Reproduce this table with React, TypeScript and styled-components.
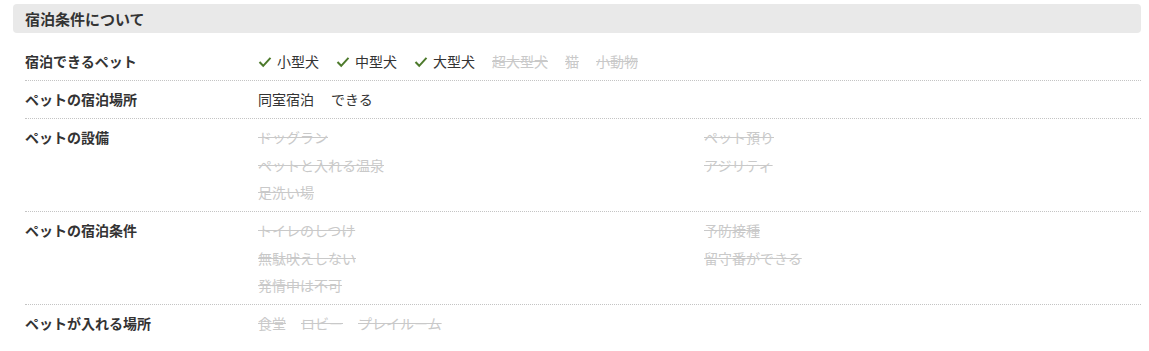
import React from "react";
import styled, { createGlobalStyle } from "styled-components";

const GlobalStyle = createGlobalStyle`
  body {
    margin: 0;
    background: #fff;
    font-family: "Noto Sans CJK JP", "Noto Sans", sans-serif;
    color: #333;
  }
`;

// 全体の枠
const Section = styled.section`
  width: 1128px;
  padding: 4px 0 0 13px;
`;

// 見出し
const Heading = styled.h2`
  margin: 0;
  height: 29px;
  padding-left: 12px;
  display: flex;
  align-items: center;
  background: #e9e9e9;
  border-radius: 4px;
  font-size: 15px;
  font-weight: 700;
  color: #333;
`;

const Table = styled.div`
  margin: 10px 0 0 12px;
`;

// 1行
const Row = styled.div<{ $last?: boolean }>`
  display: flex;
  padding: 5px 0 4.5px;
  border-bottom: ${(p) => (p.$last ? "none" : "1px dotted #c4c4c4")};
  font-size: 14px;
  line-height: 27.5px;
`;

const Label = styled.div`
  width: 233px;
  flex-shrink: 0;
  font-weight: 700;
  color: #333;
`;

// 横並びの値
const Inline = styled.div<{ $gap?: number }>`
  display: flex;
  flex-wrap: wrap;
  gap: ${(p) => p.$gap ?? 17}px;
`;

// 2列の値
const Columns = styled.div`
  display: grid;
  grid-template-columns: 446px 1fr;
  grid-auto-flow: column;
  grid-template-rows: repeat(3, 27.5px);
  flex: 1;
`;

const Item = styled.span<{ $off?: boolean }>`
  display: inline-flex;
  align-items: center;
  color: ${(p) => (p.$off ? "#c9c9c9" : "#333")};
  text-decoration: ${(p) => (p.$off ? "line-through" : "none")};
  text-decoration-color: #c9c9c9;
`;

const CheckMark = styled.svg`
  width: 14px;
  height: 12px;
  margin-right: 5px;
`;

const Check = () => (
  <CheckMark viewBox="0 0 14 12">
    <polyline
      points="1.5,6 5.2,9.8 12.5,1.8"
      fill="none"
      stroke="#4d7a2c"
      strokeWidth="2"
    />
  </CheckMark>
);

type Pet = { name: string; ok: boolean };

const pets: Pet[] = [
  { name: "小型犬", ok: true },
  { name: "中型犬", ok: true },
  { name: "大型犬", ok: true },
  { name: "超大型犬", ok: false },
  { name: "猫", ok: false },
  { name: "小動物", ok: false },
];

const facilities = [
  ["ドッグラン", "ペットと入れる温泉", "足洗い場"],
  ["ペット預り", "アジリティ"],
];

const conditions = [
  ["トイレのしつけ", "無駄吠えしない", "発情中は不可"],
  ["予防接種", "留守番ができる"],
];

const places = ["食堂", "ロビー", "プレイルーム"];

const TwoColumns = ({ cols }: { cols: string[][] }) => (
  <Columns>
    {cols.map((col, ci) =>
      [0, 1, 2].map((ri) => (
        <div key={`${ci}-${ri}`}>
          {col[ri] && <Item $off>{col[ri]}</Item>}
        </div>
      ))
    )}
  </Columns>
);

const App = () => {
  return (
    <>
      <GlobalStyle />
      <Section>
        <Heading>宿泊条件について</Heading>
        <Table>
          <Row>
            <Label>宿泊できるペット</Label>
            <Inline>
              {pets.map((p) => (
                <Item key={p.name} $off={!p.ok}>
                  {p.ok && <Check />}
                  {p.name}
                </Item>
              ))}
            </Inline>
          </Row>
          <Row>
            <Label>ペットの宿泊場所</Label>
            <Inline $gap={17}>
              <Item>同室宿泊</Item>
              <Item>できる</Item>
            </Inline>
          </Row>
          <Row>
            <Label>ペットの設備</Label>
            <TwoColumns cols={facilities} />
          </Row>
          <Row>
            <Label>ペットの宿泊条件</Label>
            <TwoColumns cols={conditions} />
          </Row>
          <Row $last>
            <Label>ペットが入れる場所</Label>
            <Inline $gap={15}>
              {places.map((p) => (
                <Item key={p} $off>
                  {p}
                </Item>
              ))}
            </Inline>
          </Row>
        </Table>
      </Section>
    </>
  );
};

export default App;
